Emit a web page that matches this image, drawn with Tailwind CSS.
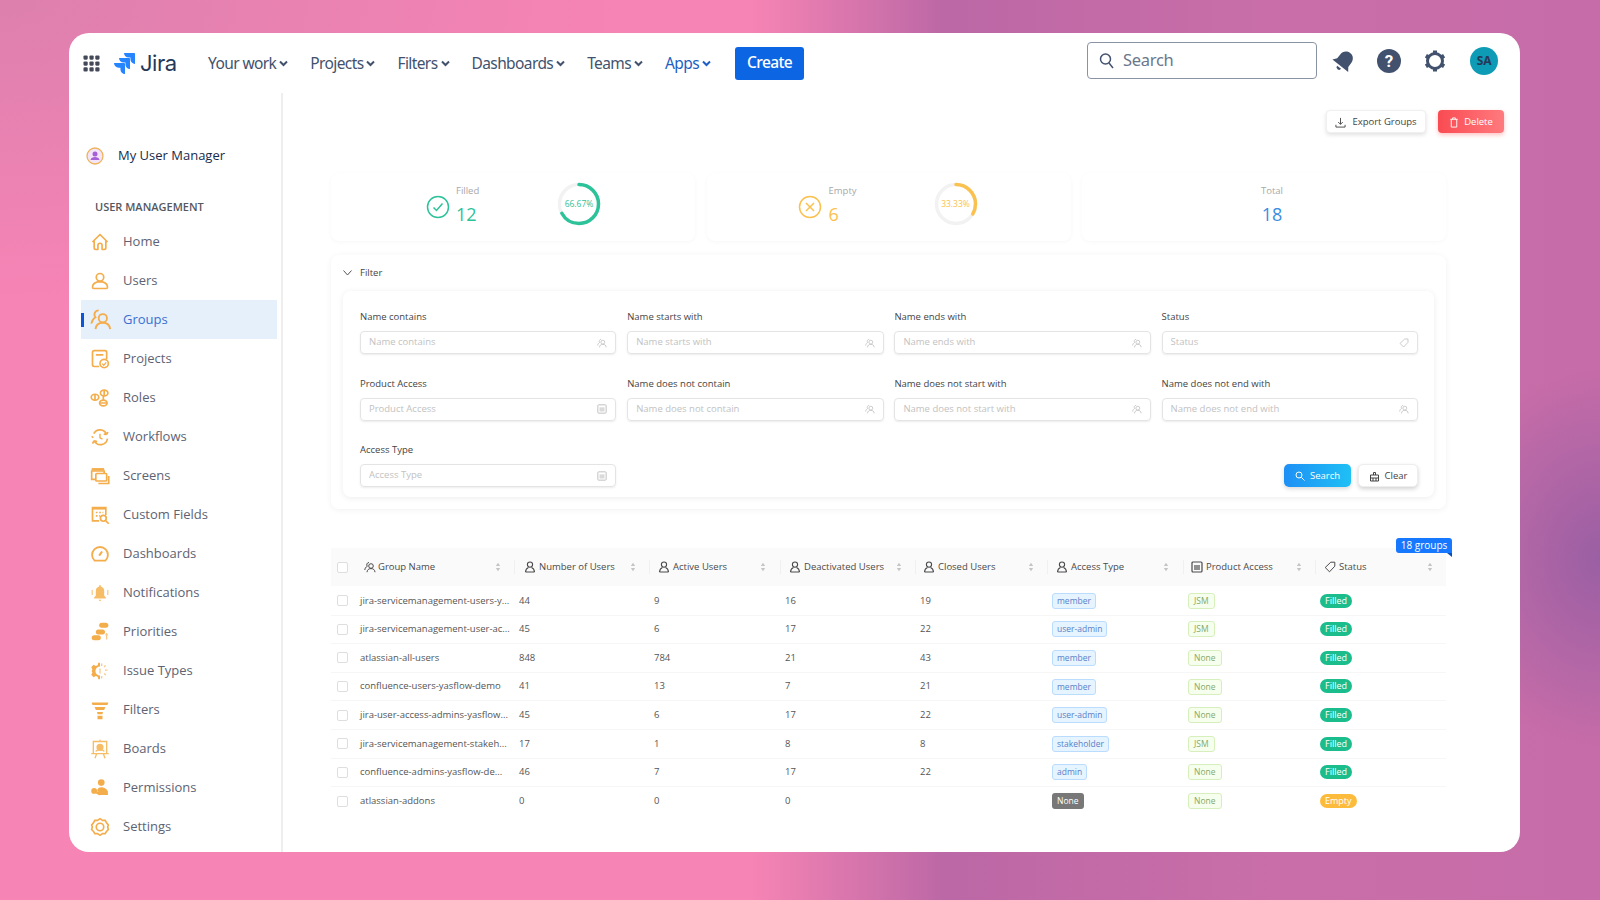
<!DOCTYPE html>
<html lang="en">
<head>
<meta charset="utf-8">
<title>My User Manager</title>
<script src="https://cdn.jsdelivr.net/npm/@tailwindcss/browser@4"></script>
</head>
<body class="w-[1600px] h-[900px] overflow-hidden pt-[33px] pl-[69px] font-['Open_Sans',sans-serif] bg-[radial-gradient(ellipse_150px_190px_at_100%_62%,#9a5fa3,transparent),radial-gradient(ellipse_620px_300px_at_0%_0%,#dd80ae,transparent),linear-gradient(90deg,#f684b5_0%,#f684b4_47%,#bc68a6_59%,#c96ea8_80%,#c66ca8_100%)]">
<svg class="hidden" xmlns="http://www.w3.org/2000/svg">
  <symbol id="u" viewBox="0 0 12 12"><circle cx="6" cy="3.600" r="2.600" fill="none" stroke="currentColor" stroke-width="1.100"/><path d="M1.500 11c.2-2.600 1.600-4 3-4.500M10.500 11c-.2-2.600-1.600-4-3-4.500M1.500 11h9" fill="none" stroke="currentColor" stroke-width="1.100"/></symbol>
  <symbol id="ug" viewBox="0 0 12 12"><circle cx="7" cy="5" r="2.300" fill="none" stroke="currentColor" stroke-width="1"/><path d="M3 11.200c.2-2.400 1.600-3.600 4-3.600s3.800 1.200 4 3.600M5 1.500a2.300 2.300 0 0 0-1.700 3.800C1.800 6 .9 7.300.8 9" fill="none" stroke="currentColor" stroke-width="1"/></symbol>
  <symbol id="s" viewBox="0 0 8 14"><path d="M4 1 7 5.500H1z" fill="#c4c4c4"/><path d="M4 13 1 8.500h6z" fill="#c4c4c4"/></symbol>
  <symbol id="box" viewBox="0 0 12 12"><rect x="1" y="1" width="10" height="10" rx="1" fill="none" stroke="currentColor" stroke-width="1.200"/><rect x="3" y="4" width="6" height="5" fill="currentColor" opacity=".6"/></symbol>
  <symbol id="tag" viewBox="0 0 12 12"><path d="M6.800 1.200H10.800V5.200L5.500 10.800 1.200 6.500z" fill="none" stroke="currentColor" stroke-width="1"/></symbol>
</svg>

<div class="w-[1451px] h-[819px] rounded-[20px] bg-white overflow-hidden">
  <!-- top navigation -->
  <header class="h-[60px] flex items-center pl-[14px] pr-[22px]">
    <svg class="w-[17px] h-[17px] text-[#44495a]" viewBox="0 0 18 18" fill="currentColor"><rect x=".5" y=".5" width="4.500" height="4.500" rx="1.200"/><rect x="6.800" y=".5" width="4.500" height="4.500" rx="1.200"/><rect x="13" y=".5" width="4.500" height="4.500" rx="1.200"/><rect x=".5" y="6.800" width="4.500" height="4.500" rx="1.200"/><rect x="6.800" y="6.800" width="4.500" height="4.500" rx="1.200"/><rect x="13" y="6.800" width="4.500" height="4.500" rx="1.200"/><rect x=".5" y="13" width="4.500" height="4.500" rx="1.200"/><rect x="6.800" y="13" width="4.500" height="4.500" rx="1.200"/><rect x="13" y="13" width="4.500" height="4.500" rx="1.200"/></svg>
    <svg class="w-[21px] h-[21px] ml-[14px] text-[#2684ff]" viewBox="0 0 24 24" fill="currentColor"><path d="M11.571 11.513H0a5.218 5.218 0 0 0 5.232 5.215h2.130v2.057A5.215 5.215 0 0 0 12.575 24V12.518a1.005 1.005 0 0 0-1.005-1.005zm5.723-5.756H5.736a5.215 5.215 0 0 0 5.215 5.214h2.129v2.058a5.218 5.218 0 0 0 5.215 5.214V6.758a1.001 1.001 0 0 0-1.001-1.001zM23.013 0H11.455a5.215 5.215 0 0 0 5.215 5.215h2.129v2.057A5.215 5.215 0 0 0 24 12.483V1.005A1.001 1.001 0 0 0 23.013 0Z"/></svg>
    <span class="ml-[5px] font-['Inter',sans-serif] font-normal text-[22px] leading-none tracking-[-0.5px] text-[#253858] w-[68px]">Jira</span>
    <nav class="flex items-center gap-[22px] font-['Noto_Sans',sans-serif] text-[15.500px] tracking-[-0.6px] text-[#42526e]">
      <a class="flex items-center gap-[3px] pt-[1px]">Your work<svg class="w-[9px] h-[7px]" viewBox="0 0 9 7" fill="none" stroke="currentColor" stroke-width="2"><path d="M1 1.500 4.500 5 8 1.500"/></svg></a>
      <a class="flex items-center gap-[3px] pt-[1px]">Projects<svg class="w-[9px] h-[7px]" viewBox="0 0 9 7" fill="none" stroke="currentColor" stroke-width="2"><path d="M1 1.500 4.500 5 8 1.500"/></svg></a>
      <a class="flex items-center gap-[3px] pt-[1px]">Filters<svg class="w-[9px] h-[7px]" viewBox="0 0 9 7" fill="none" stroke="currentColor" stroke-width="2"><path d="M1 1.500 4.500 5 8 1.500"/></svg></a>
      <a class="flex items-center gap-[3px] pt-[1px]">Dashboards<svg class="w-[9px] h-[7px]" viewBox="0 0 9 7" fill="none" stroke="currentColor" stroke-width="2"><path d="M1 1.500 4.500 5 8 1.500"/></svg></a>
      <a class="flex items-center gap-[3px] pt-[1px]">Teams<svg class="w-[9px] h-[7px]" viewBox="0 0 9 7" fill="none" stroke="currentColor" stroke-width="2"><path d="M1 1.500 4.500 5 8 1.500"/></svg></a>
      <a class="flex items-center gap-[3px] pt-[1px] text-[#1d5fc4]">Apps<svg class="w-[9px] h-[7px]" viewBox="0 0 9 7" fill="none" stroke="currentColor" stroke-width="2"><path d="M1 1.500 4.500 5 8 1.500"/></svg></a>
      <button class="w-[69px] h-[33px] ml-[2px] rounded-[3px] bg-[#0c66e4] text-white font-medium">Create</button>
    </nav>
    <div class="ml-auto mb-[5px] flex items-center">
      <div class="w-[230px] h-[37px] rounded-[4px] border border-[#8993a4] flex items-center pl-[11px] gap-[9px] font-['Noto_Sans',sans-serif] text-[16.500px] tracking-[-0.3px] text-[#6b778c]">
        <svg class="w-[15px] h-[17px] text-[#42526e]" viewBox="0 0 15 17" fill="none" stroke="currentColor" stroke-width="1.500"><circle cx="6.500" cy="7" r="5"/><path d="m10 11 4 5"/></svg>
        <span>Search</span>
      </div>
      <svg class="w-[26px] h-[26px] ml-[14px] text-[#42526e]" viewBox="0 0 26 26" fill="currentColor"><g transform="rotate(38 13 13)"><path d="M13 3c-4.500 0-7 3.500-7 7.500V15l-3 4h20l-3-4v-4.500C20 6.500 17.500 3 13 3z"/><path d="M10.500 21a2.500 2.500 0 0 0 5 0z"/></g></svg>
      <svg class="w-[26px] h-[26px] ml-[19px]" viewBox="0 0 26 26"><circle cx="13" cy="13" r="12" fill="#42526e"/><text x="13" y="19" text-anchor="middle" font-family="Roboto, sans-serif" font-weight="700" font-size="17" fill="#fff">?</text></svg>
      <svg class="w-[26px] h-[26px] ml-[20px] text-[#42526e]" viewBox="0 0 26 26" fill="none" stroke="currentColor"><circle cx="13" cy="13" r="7.500" stroke-width="3"/><path d="M13 2.500v3.500M13 20v3.500M3.900 7.700l3 1.800M19.100 16.500l3 1.800M3.900 18.300l3-1.800M19.100 9.500l3-1.800" stroke-width="4"/></svg>
      <div class="w-[28px] h-[28px] ml-[22px] rounded-full bg-[#0e9bb5] flex items-center justify-center font-['Noto_Sans',sans-serif] text-[12px] font-bold tracking-[-0.3px] text-[#253858]">SA</div>
    </div>
  </header>

  <div class="flex h-[759px]">
    <!-- sidebar -->
    <aside class="w-[214px] shrink-0 border-r-2 border-[#eeeeee] pl-[12px] text-[13px] text-[#5e6373] whitespace-nowrap">
      <div class="flex items-center h-[20px] mt-[53px] pl-[5px] gap-[14px] text-[#172b4d] font-medium text-[13px]">
        <svg class="w-[18px] h-[18px]" viewBox="0 0 18 18"><circle cx="9" cy="9" r="8" fill="#f3e4f7" stroke="#eeb35a" stroke-width="1.300"/><circle cx="9" cy="7" r="2.500" fill="#a65fd6"/><path d="M4.500 13c.5-2.300 2.300-3 4.500-3s4 .7 4.500 3z" fill="#a65fd6"/></svg>
        My User Manager
      </div>
      <div class="pl-[14px] mt-[33px] h-[16px] leading-[16px] text-[11px] font-semibold text-[#55585f]">USER MANAGEMENT</div>
      <div class="mt-[7px] w-[196px] text-[#5e6373]">
        <a class="h-[39.050px] flex items-center pl-[9px] gap-[13px]"><svg class="w-[20px] h-[20px] shrink-0" viewBox="0 0 24 24" fill="none" stroke="#f4ad4b" stroke-width="2" stroke-linejoin="round"><path d="M3 12 12 3l9 9M5 10v9a2 2 0 0 0 2 2h2.500v-5a2.500 2.500 0 0 1 5 0v5H17a2 2 0 0 0 2-2v-9"/></svg>Home</a>
        <a class="h-[39.050px] flex items-center pl-[9px] gap-[13px]"><svg class="w-[20px] h-[20px] shrink-0" viewBox="0 0 24 24" fill="none" stroke="#f4ad4b" stroke-width="2"><circle cx="12" cy="7.500" r="4.500"/><path d="M9 13c-4 1-6 3.500-6 6.500 0 1 .5 1.500 1.500 1.500h15c1 0 1.500-.5 1.500-1.500 0-3-2-5.500-6-6.500z"/></svg>Users</a>
        <a class="relative h-[39.050px] flex items-center pl-[9px] gap-[13px] bg-[#e6f0fb] text-[#3a6fd0]"><span class="absolute left-0 top-[13px] w-[3px] h-[14px] bg-[#0c55d9]"></span><svg class="w-[22px] h-[22px] shrink-0 -mr-[2px]" viewBox="0 0 24 24" fill="none" stroke="#f4ad4b" stroke-width="2"><circle cx="14" cy="10" r="4.500"/><path d="M6 22c.5-4.500 3.500-7 8-7s7.500 2.500 8 7M9.500 1.500A4.500 4.500 0 0 0 6 9C3.500 10.500 2 13 1.500 16"/></svg>Groups</a>
        <a class="h-[39.050px] flex items-center pl-[9px] gap-[13px]"><svg class="w-[20px] h-[20px] shrink-0" viewBox="0 0 24 24" fill="none" stroke="#f4ad4b" stroke-width="2"><path d="M11 21H5a2 2 0 0 1-2-2V4a2 2 0 0 1 2-2h13a2 2 0 0 1 2 2v8M7 7h9"/><circle cx="17" cy="17.500" r="5"/><path d="m14.500 17.500 2 2 3-3.500" stroke-width="1.500"/></svg>Projects</a>
        <a class="h-[39.050px] flex items-center pl-[9px] gap-[13px]"><svg class="w-[20px] h-[20px] shrink-0" viewBox="0 0 24 24" fill="none" stroke="#f4ad4b" stroke-width="2"><ellipse cx="6" cy="11" rx="4.500" ry="3.500"/><path d="M6 7.500v7"/><ellipse cx="17" cy="6" rx="4.500" ry="3.500"/><path d="M17 2.500v7"/><ellipse cx="16" cy="18" rx="4.500" ry="3.500"/><path d="M11.500 18h9M16 9.500v5"/></svg>Roles</a>
        <a class="h-[39.050px] flex items-center pl-[9px] gap-[13px]"><svg class="w-[20px] h-[20px] shrink-0" viewBox="0 0 24 24" fill="none" stroke="#f4ad4b" stroke-width="2"><path d="M4.500 8A8.500 8.500 0 0 1 20 9M20 9l1.500-3M20 9l-3.500-.5M21 14a8.500 8.500 0 0 1-16 2.500M5 16.500 3 20M5 16.500l3.500 1"/><path d="M12 8v5l3 1.500M2 11l2 2" stroke-width="1.700"/></svg>Workflows</a>
        <a class="h-[39.050px] flex items-center pl-[9px] gap-[13px]"><svg class="w-[20px] h-[20px] shrink-0" viewBox="0 0 24 24" fill="none" stroke="#f4ad4b" stroke-width="2"><path d="M7 16H2V6h15v3"/><path d="M2 4h15" stroke-width="3"/><rect x="7" y="9" width="13" height="9" rx="1"/><path d="M22.500 12v9H10"/></svg>Screens</a>
        <a class="h-[39.050px] flex items-center pl-[9px] gap-[13px]"><svg class="w-[20px] h-[20px] shrink-0" viewBox="0 0 24 24" fill="none" stroke="#f4ad4b" stroke-width="2"><path d="M11 19H3V3h16v9"/><path d="M3 4h16" stroke-width="3"/><path d="M7 9h2M11 9h2M15 9h1M7 13h2M11 13h1" stroke-width="2"/><circle cx="16" cy="16" r="3.500"/><path d="m19 19 3.500 3.500"/></svg>Custom Fields</a>
        <a class="h-[39.050px] flex items-center pl-[9px] gap-[13px]"><svg class="w-[20px] h-[20px] shrink-0" viewBox="0 0 24 24" fill="none" stroke="#f4ad4b" stroke-width="2.200"><path d="M5.500 20h13a9.500 9.500 0 1 0-13 0z"/><path d="m11 14 3.500-5" stroke-width="2.500"/></svg>Dashboards</a>
        <a class="h-[39.050px] flex items-center pl-[9px] gap-[13px]"><svg class="w-[20px] h-[20px] shrink-0" viewBox="0 0 24 24" fill="#f7bd66"><path d="M12 2.500c-.7 0-1 .5-1 1v.8C8.500 5 7 7 7 9.500V15l-2 2.500v1h14v-1L17 15V9.500c0-2.500-1.500-4.500-4-5.200v-.8c0-.5-.3-1-1-1z"/><path d="M10 20h4l-2 2zM2 8.500h1.200v6H2zM20.800 8.500H22v6h-1.200z"/></svg>Notifications</a>
        <a class="h-[39.050px] flex items-center pl-[9px] gap-[13px]"><svg class="w-[20px] h-[20px] shrink-0" viewBox="0 0 24 24" fill="#f4ad4b"><rect x="11" y="1" width="11" height="6" rx="3"/><rect x="7" y="9" width="11" height="6" rx="3"/><rect x="2" y="16" width="11" height="6" rx="3"/><path d="M20 13l2 3h-1.300v5h-1.400v-5H18z" opacity=".7"/></svg>Priorities</a>
        <a class="h-[39.050px] flex items-center pl-[9px] gap-[13px]"><svg class="w-[20px] h-[20px] shrink-0" viewBox="0 0 24 24"><path d="M12 2v4.500a5.500 5.500 0 0 0 0 11V22l-2-.2-.8-2.800-2.300-1-2.600 1.400-2.800-2.800L2.900 14 2 12l.9-2-1.400-2.600L4.300 4.600 6.900 6l2.300-1L10 2.200z" fill="#f4ad4b"/><path d="M14 3v3M18.500 5l-1.500 2.500M21 11h-3M19 17l-2-2M14 21v-3M12 9v6" stroke="#f7c98a" stroke-width="1.500"/></svg>Issue Types</a>
        <a class="h-[39.050px] flex items-center pl-[9px] gap-[13px]"><svg class="w-[20px] h-[20px] shrink-0" viewBox="0 0 24 24" fill="#f4ad4b"><path d="M2 3h20l-1 3H3zM5.500 8.500h13L17 12H7zM8.500 14.500h7l-.5 2.500H9zM9 19h6v4H9z"/></svg>Filters</a>
        <a class="h-[39.050px] flex items-center pl-[9px] gap-[13px]"><svg class="w-[20px] h-[20px] shrink-0" viewBox="0 0 24 24" fill="none" stroke="#f7bd66" stroke-width="1.600"><path d="M1.500 17.500h21M4 3h16v14.500H4zM12 1v2M8 17.500 6 23M16 17.500l2 5.500"/><circle cx="12" cy="10" r="3.500" fill="#f7bd66"/><path d="M7 15c.5-1.500 2-2 5-2s4.500.5 5 2" stroke-width="1.600"/></svg>Boards</a>
        <a class="h-[39.050px] flex items-center pl-[9px] gap-[13px]"><svg class="w-[20px] h-[20px] shrink-0" viewBox="0 0 24 24" fill="#f4ad4b"><circle cx="13.500" cy="5.500" r="4"/><path d="M7 19l3-2.500-1.500-1.500c.8-3 2.500-4 5-4s6 1 8 5v4.500H12z"/><circle cx="5" cy="15.500" r="3.500"/><path d="m7 17 4 4 1.500-1.500-4-4z"/></svg>Permissions</a>
        <a class="h-[39.050px] flex items-center pl-[9px] gap-[13px]"><svg class="w-[20px] h-[20px] shrink-0" viewBox="0 0 24 24" fill="none" stroke="#f4ad4b" stroke-width="2"><path d="M12 2 15 4l3.200 0 1.600 2.800 2.200 2.700-.8 2.500.8 3-2.200 2.300-1.600 2.700-3.200 0L12 22 9 20l-3.200 0-1.600-2.700L2 15l.8-3L2 9.500l2.200-2.700L5.800 4 9 4z"/><circle cx="12" cy="12" r="4.500"/></svg>Settings</a>
      </div>
    </aside>

    <!-- main -->
    <main class="flex-1 pt-[17px] text-[#3d3d3d]">
      <div class="flex justify-end gap-[12px] pr-[16px] text-[9.500px]">
        <button class="w-[100px] h-[23px] pt-[1px] rounded-[4px] bg-white border border-[#f0f0f0] shadow-[0_2px_4px_rgba(0,0,0,0.12)] flex items-center justify-center gap-[6px] text-[#444]"><svg class="w-[11px] h-[11px]" viewBox="0 0 12 12" fill="none" stroke="currentColor"><path d="M6 1v7M3.500 5.500 6 8l2.500-2.500M1 8.500V11h10V8.500"/></svg>Export Groups</button>
        <button class="w-[66px] h-[23px] pt-[1px] rounded-[4px] bg-[linear-gradient(90deg,#f94b52,#ff7a7e)] shadow-[0_2px_4px_rgba(255,80,80,0.35)] flex items-center justify-center gap-[5px] text-white"><svg class="w-[10px] h-[11px]" viewBox="0 0 10 12" fill="none" stroke="currentColor"><path d="M2 2.500V11h6V2.500M1 2.500h8M3.500 2.500V1h3v1.500"/></svg>Delete</button>
      </div>

      <div class="ml-[48px] w-[1115px]">
        <!-- stats -->
        <section class="mt-[40px] grid grid-cols-[364px_364px_364px] gap-x-[11.500px] h-[68px]">
          <div class="relative rounded-[8px] shadow-[0_1px_4px_rgba(0,0,0,0.035)] flex items-center pl-[95px]">
            <svg class="w-[24px] h-[24px]" viewBox="0 0 24 24" fill="none" stroke="#2cc29a" stroke-width="1.500"><circle cx="12" cy="12" r="10.500"/><path d="m7.500 12.500 3 3 6-7"/></svg>
            <div class="ml-[6px] w-[99px] -mt-[2px]"><div class="text-[9.500px] leading-[12px] text-[#a8a8a8]">Filled</div><div class="pt-[3px] text-[18px] leading-[28px] text-[#2cc29a]">12</div></div>
            <div class="relative w-[44px] h-[44px] ml-[2px] -mt-[6px]">
              <svg class="w-[44px] h-[44px] -rotate-90" viewBox="0 0 44 44" fill="none" stroke-width="3.500"><circle cx="22" cy="22" r="19.500" stroke="#f2f2f2"/><circle cx="22" cy="22" r="19.500" stroke="#2cc29a" stroke-dasharray="81.700 122.500" stroke-linecap="round"/></svg>
              <span class="absolute inset-0 flex items-center justify-center text-[8.500px] text-[#2cc29a]">66.67%</span>
            </div>
          </div>
          <div class="relative rounded-[8px] shadow-[0_1px_4px_rgba(0,0,0,0.035)] flex items-center pl-[91px]">
            <svg class="w-[24px] h-[24px]" viewBox="0 0 24 24" fill="none" stroke="#fbc14f" stroke-width="1.500"><circle cx="12" cy="12" r="10.500"/><path d="m8 8 8 8M16 8l-8 8"/></svg>
            <div class="ml-[7px] w-[105px] -mt-[2px]"><div class="text-[9.500px] leading-[12px] text-[#a8a8a8]">Empty</div><div class="pt-[3px] text-[18px] leading-[28px] text-[#fbc14f]">6</div></div>
            <div class="relative w-[44px] h-[44px] -mt-[6px]">
              <svg class="w-[44px] h-[44px] -rotate-90" viewBox="0 0 44 44" fill="none" stroke-width="3.500"><circle cx="22" cy="22" r="19.500" stroke="#f2f2f2"/><circle cx="22" cy="22" r="19.500" stroke="#fbc14f" stroke-dasharray="40.800 122.500" stroke-linecap="round"/></svg>
              <span class="absolute inset-0 flex items-center justify-center text-[8.500px] text-[#fbc14f]">33.33%</span>
            </div>
          </div>
          <div class="rounded-[8px] shadow-[0_1px_4px_rgba(0,0,0,0.035)] flex flex-col items-center justify-center pl-[16px] pb-[2px]">
            <div class="text-[9.500px] leading-[12px] text-[#a8a8a8]">Total</div><div class="pt-[3px] text-[18px] leading-[28px] text-[#3b8de0]">18</div>
          </div>
        </section>

        <!-- filter -->
        <section class="mt-[14px] h-[254px] rounded-[8px] shadow-[0_1px_6px_rgba(0,0,0,0.06)]">
          <div class="h-[36px] flex items-center pl-[12px] gap-[8px] text-[9.500px] text-[#444]"><svg class="w-[9px] h-[6px]" viewBox="0 0 9 6" fill="none" stroke="#555" stroke-width="1"><path d="M.5.5 4.500 5 8.500.5"/></svg>Filter</div>
          <div class="mx-[12px] h-[206px] rounded-[8px] shadow-[0_1px_6px_rgba(0,0,0,0.08)] pt-[19px] pl-[17px] pr-[16px] grid grid-cols-4 gap-x-[10.800px] gap-y-[22.500px] content-start text-[9.500px]">
            <label class="block"><span class="block h-[14px] leading-[14px] mb-[7px] text-[#444]">Name contains</span><span class="h-[23px] flex items-center rounded-[4px] border border-[#e4e4e4] shadow-[0_1px_2px_rgba(0,0,0,0.08)] px-[8px] text-[#c2c2c2]"><input class="flex-1 min-w-0 outline-none placeholder:text-[#c2c2c2]" placeholder="Name contains"><svg class="w-[10px] h-[10px]"><use href="#ug"/></svg></span></label>
            <label class="block"><span class="block h-[14px] leading-[14px] mb-[7px] text-[#444]">Name starts with</span><span class="h-[23px] flex items-center rounded-[4px] border border-[#e4e4e4] shadow-[0_1px_2px_rgba(0,0,0,0.08)] px-[8px] text-[#c2c2c2]"><input class="flex-1 min-w-0 outline-none placeholder:text-[#c2c2c2]" placeholder="Name starts with"><svg class="w-[10px] h-[10px]"><use href="#ug"/></svg></span></label>
            <label class="block"><span class="block h-[14px] leading-[14px] mb-[7px] text-[#444]">Name ends with</span><span class="h-[23px] flex items-center rounded-[4px] border border-[#e4e4e4] shadow-[0_1px_2px_rgba(0,0,0,0.08)] px-[8px] text-[#c2c2c2]"><input class="flex-1 min-w-0 outline-none placeholder:text-[#c2c2c2]" placeholder="Name ends with"><svg class="w-[10px] h-[10px]"><use href="#ug"/></svg></span></label>
            <label class="block"><span class="block h-[14px] leading-[14px] mb-[7px] text-[#444]">Status</span><span class="h-[23px] flex items-center rounded-[4px] border border-[#e4e4e4] shadow-[0_1px_2px_rgba(0,0,0,0.08)] px-[8px] text-[#c2c2c2]"><input class="flex-1 min-w-0 outline-none placeholder:text-[#c2c2c2]" placeholder="Status"><svg class="w-[10px] h-[10px]"><use href="#tag"/></svg></span></label>
            <label class="block"><span class="block h-[14px] leading-[14px] mb-[7px] text-[#444]">Product Access</span><span class="h-[23px] flex items-center rounded-[4px] border border-[#e4e4e4] shadow-[0_1px_2px_rgba(0,0,0,0.08)] px-[8px] text-[#c2c2c2]"><input class="flex-1 min-w-0 outline-none placeholder:text-[#c2c2c2]" placeholder="Product Access"><svg class="w-[10px] h-[10px]"><use href="#box"/></svg></span></label>
            <label class="block"><span class="block h-[14px] leading-[14px] mb-[7px] text-[#444]">Name does not contain</span><span class="h-[23px] flex items-center rounded-[4px] border border-[#e4e4e4] shadow-[0_1px_2px_rgba(0,0,0,0.08)] px-[8px] text-[#c2c2c2]"><input class="flex-1 min-w-0 outline-none placeholder:text-[#c2c2c2]" placeholder="Name does not contain"><svg class="w-[10px] h-[10px]"><use href="#ug"/></svg></span></label>
            <label class="block"><span class="block h-[14px] leading-[14px] mb-[7px] text-[#444]">Name does not start with</span><span class="h-[23px] flex items-center rounded-[4px] border border-[#e4e4e4] shadow-[0_1px_2px_rgba(0,0,0,0.08)] px-[8px] text-[#c2c2c2]"><input class="flex-1 min-w-0 outline-none placeholder:text-[#c2c2c2]" placeholder="Name does not start with"><svg class="w-[10px] h-[10px]"><use href="#ug"/></svg></span></label>
            <label class="block"><span class="block h-[14px] leading-[14px] mb-[7px] text-[#444]">Name does not end with</span><span class="h-[23px] flex items-center rounded-[4px] border border-[#e4e4e4] shadow-[0_1px_2px_rgba(0,0,0,0.08)] px-[8px] text-[#c2c2c2]"><input class="flex-1 min-w-0 outline-none placeholder:text-[#c2c2c2]" placeholder="Name does not end with"><svg class="w-[10px] h-[10px]"><use href="#ug"/></svg></span></label>
            <label class="block"><span class="block h-[14px] leading-[14px] mb-[7px] text-[#444]">Access Type</span><span class="h-[23px] flex items-center rounded-[4px] border border-[#e4e4e4] shadow-[0_1px_2px_rgba(0,0,0,0.08)] px-[8px] text-[#c2c2c2]"><input class="flex-1 min-w-0 outline-none placeholder:text-[#c2c2c2]" placeholder="Access Type"><svg class="w-[10px] h-[10px]"><use href="#box"/></svg></span></label>
            <div class="col-span-3 flex items-end justify-end gap-[7px]">
              <button class="w-[67px] h-[23px] pt-[1px] rounded-[5px] bg-[linear-gradient(90deg,#1e90f5,#1fc0f5)] shadow-[0_2px_4px_rgba(0,0,0,0.15)] text-white flex items-center justify-center gap-[5px]"><svg class="w-[10px] h-[10px]" viewBox="0 0 10 10" fill="none" stroke="currentColor"><circle cx="4" cy="4" r="3"/><path d="m6.500 6.500 3 3"/></svg>Search</button>
              <button class="w-[60px] h-[23px] pt-[1px] rounded-[5px] bg-white border border-[#eee] shadow-[0_2px_4px_rgba(0,0,0,0.18)] text-[#444] flex items-center justify-center gap-[5px]"><svg class="w-[11px] h-[11px]" viewBox="0 0 11 11" fill="none" stroke="currentColor"><path d="M4.500 4V1.500h2V4M1.500 4h8V10h-8zM1.500 7h8M4 7v3M7 7v3"/></svg>Clear</button>
            </div>
          </div>
        </section>

        <!-- table -->
        <section class="relative mt-[39px] text-[9.500px] text-[#555]">
          <span class="absolute -top-[10px] -right-[6px] w-[56px] h-[15px] rounded-t-[3px] rounded-bl-[3px] bg-[#1677ff] text-white text-[10px] leading-[15px] text-center z-10">18 groups<span class="absolute right-0 top-[15px] border-t-[4px] border-l-[5px] border-t-[#0a4fb8] border-l-transparent"></span></span>
          <div class="grid grid-cols-[183px_135px_131px_135px_132px_136px_132px_131px] h-[38px] mb-[1px] bg-[#fafafa] items-center font-medium text-[#4a4a4a]">
            <div class="flex items-center pl-[6px] pr-[13px]"><span class="w-[11px] h-[11px] rounded-[2px] border border-[#dedede] bg-white"></span><svg class="w-[12px] h-[12px] ml-[16px] mr-[2px]"><use href="#ug"/></svg><span class="flex-1">Group Name</span><svg class="w-[6px] h-[10px]"><use href="#s"/></svg></div>
            <div class="flex items-center h-[14px] border-l border-[#f0f0f0] pl-[9px] pr-[13px] gap-[3px]"><svg class="w-[12px] h-[12px]"><use href="#u"/></svg><span class="flex-1">Number of Users</span><svg class="w-[6px] h-[10px]"><use href="#s"/></svg></div>
            <div class="flex items-center h-[14px] border-l border-[#f0f0f0] pl-[8px] pr-[14px] gap-[3px]"><svg class="w-[12px] h-[12px]"><use href="#u"/></svg><span class="flex-1">Active Users</span><svg class="w-[6px] h-[10px]"><use href="#s"/></svg></div>
            <div class="flex items-center h-[14px] border-l border-[#f0f0f0] pl-[8px] pr-[13px] gap-[3px]"><svg class="w-[12px] h-[12px]"><use href="#u"/></svg><span class="flex-1">Deactivated Users</span><svg class="w-[6px] h-[10px]"><use href="#s"/></svg></div>
            <div class="flex items-center h-[14px] border-l border-[#f0f0f0] pl-[7px] pr-[13px] gap-[3px]"><svg class="w-[12px] h-[12px]"><use href="#u"/></svg><span class="flex-1">Closed Users</span><svg class="w-[6px] h-[10px]"><use href="#s"/></svg></div>
            <div class="flex items-center h-[14px] border-l border-[#f0f0f0] pl-[8px] pr-[14px] gap-[3px]"><svg class="w-[12px] h-[12px]"><use href="#u"/></svg><span class="flex-1">Access Type</span><svg class="w-[6px] h-[10px]"><use href="#s"/></svg></div>
            <div class="flex items-center h-[14px] border-l border-[#f0f0f0] pl-[7px] pr-[13px] gap-[3px]"><svg class="w-[12px] h-[12px]"><use href="#box"/></svg><span class="flex-1">Product Access</span><svg class="w-[6px] h-[10px]"><use href="#s"/></svg></div>
            <div class="flex items-center h-[14px] border-l border-[#f0f0f0] pl-[8px] pr-[13px] gap-[3px]"><svg class="w-[12px] h-[12px]"><use href="#tag"/></svg><span class="flex-1">Status</span><svg class="w-[6px] h-[10px]"><use href="#s"/></svg></div>
          </div>

          <div class="grid grid-cols-[183px_135px_131px_135px_132px_136px_132px_131px] h-[28.600px] items-center border-b border-[#f6f6f6]"><div class="flex items-center min-w-0 pl-[6px]"><span class="shrink-0 w-[11px] h-[11px] rounded-[2px] border border-[#dedede]"></span><span class="ml-[12px] whitespace-nowrap">jira-servicemanagement-users-y...</span></div><div class="pl-[5px]">44</div><div class="pl-[5px]">9</div><div class="pl-[5px]">16</div><div class="pl-[5px]">19</div><div class="pl-[5px]"><span class="inline-block h-[16px] leading-[14px] px-[4px] rounded-[3px] border border-[#b9dcff] bg-[#e6f4ff] text-[#5a7fc7] text-[8.500px]">member</span></div><div class="pl-[5px]"><span class="inline-block h-[16px] leading-[14px] px-[5px] rounded-[3px] border border-[#d6efbd] bg-[#f6ffed] text-[#86a86b] text-[8.500px]">JSM</span></div><div class="pl-[5px]"><span class="inline-block h-[14px] leading-[14px] px-[5px] rounded-full bg-[#1bbd8d] text-white text-[9px]">Filled</span></div></div>
          <div class="grid grid-cols-[183px_135px_131px_135px_132px_136px_132px_131px] h-[28.600px] items-center border-b border-[#f6f6f6]"><div class="flex items-center min-w-0 pl-[6px]"><span class="shrink-0 w-[11px] h-[11px] rounded-[2px] border border-[#dedede]"></span><span class="ml-[12px] whitespace-nowrap">jira-servicemanagement-user-ac...</span></div><div class="pl-[5px]">45</div><div class="pl-[5px]">6</div><div class="pl-[5px]">17</div><div class="pl-[5px]">22</div><div class="pl-[5px]"><span class="inline-block h-[16px] leading-[14px] px-[4px] rounded-[3px] border border-[#b9dcff] bg-[#e6f4ff] text-[#5a7fc7] text-[8.500px]">user-admin</span></div><div class="pl-[5px]"><span class="inline-block h-[16px] leading-[14px] px-[5px] rounded-[3px] border border-[#d6efbd] bg-[#f6ffed] text-[#86a86b] text-[8.500px]">JSM</span></div><div class="pl-[5px]"><span class="inline-block h-[14px] leading-[14px] px-[5px] rounded-full bg-[#1bbd8d] text-white text-[9px]">Filled</span></div></div>
          <div class="grid grid-cols-[183px_135px_131px_135px_132px_136px_132px_131px] h-[28.600px] items-center border-b border-[#f6f6f6]"><div class="flex items-center min-w-0 pl-[6px]"><span class="shrink-0 w-[11px] h-[11px] rounded-[2px] border border-[#dedede]"></span><span class="ml-[12px] whitespace-nowrap">atlassian-all-users</span></div><div class="pl-[5px]">848</div><div class="pl-[5px]">784</div><div class="pl-[5px]">21</div><div class="pl-[5px]">43</div><div class="pl-[5px]"><span class="inline-block h-[16px] leading-[14px] px-[4px] rounded-[3px] border border-[#b9dcff] bg-[#e6f4ff] text-[#5a7fc7] text-[8.500px]">member</span></div><div class="pl-[5px]"><span class="inline-block h-[16px] leading-[14px] px-[5px] rounded-[3px] border border-[#d6efbd] bg-[#f6ffed] text-[#86a86b] text-[8.500px]">None</span></div><div class="pl-[5px]"><span class="inline-block h-[14px] leading-[14px] px-[5px] rounded-full bg-[#1bbd8d] text-white text-[9px]">Filled</span></div></div>
          <div class="grid grid-cols-[183px_135px_131px_135px_132px_136px_132px_131px] h-[28.600px] items-center border-b border-[#f6f6f6]"><div class="flex items-center min-w-0 pl-[6px]"><span class="shrink-0 w-[11px] h-[11px] rounded-[2px] border border-[#dedede]"></span><span class="ml-[12px] whitespace-nowrap">confluence-users-yasflow-demo</span></div><div class="pl-[5px]">41</div><div class="pl-[5px]">13</div><div class="pl-[5px]">7</div><div class="pl-[5px]">21</div><div class="pl-[5px]"><span class="inline-block h-[16px] leading-[14px] px-[4px] rounded-[3px] border border-[#b9dcff] bg-[#e6f4ff] text-[#5a7fc7] text-[8.500px]">member</span></div><div class="pl-[5px]"><span class="inline-block h-[16px] leading-[14px] px-[5px] rounded-[3px] border border-[#d6efbd] bg-[#f6ffed] text-[#86a86b] text-[8.500px]">None</span></div><div class="pl-[5px]"><span class="inline-block h-[14px] leading-[14px] px-[5px] rounded-full bg-[#1bbd8d] text-white text-[9px]">Filled</span></div></div>
          <div class="grid grid-cols-[183px_135px_131px_135px_132px_136px_132px_131px] h-[28.600px] items-center border-b border-[#f6f6f6]"><div class="flex items-center min-w-0 pl-[6px]"><span class="shrink-0 w-[11px] h-[11px] rounded-[2px] border border-[#dedede]"></span><span class="ml-[12px] whitespace-nowrap">jira-user-access-admins-yasflow...</span></div><div class="pl-[5px]">45</div><div class="pl-[5px]">6</div><div class="pl-[5px]">17</div><div class="pl-[5px]">22</div><div class="pl-[5px]"><span class="inline-block h-[16px] leading-[14px] px-[4px] rounded-[3px] border border-[#b9dcff] bg-[#e6f4ff] text-[#5a7fc7] text-[8.500px]">user-admin</span></div><div class="pl-[5px]"><span class="inline-block h-[16px] leading-[14px] px-[5px] rounded-[3px] border border-[#d6efbd] bg-[#f6ffed] text-[#86a86b] text-[8.500px]">None</span></div><div class="pl-[5px]"><span class="inline-block h-[14px] leading-[14px] px-[5px] rounded-full bg-[#1bbd8d] text-white text-[9px]">Filled</span></div></div>
          <div class="grid grid-cols-[183px_135px_131px_135px_132px_136px_132px_131px] h-[28.600px] items-center border-b border-[#f6f6f6]"><div class="flex items-center min-w-0 pl-[6px]"><span class="shrink-0 w-[11px] h-[11px] rounded-[2px] border border-[#dedede]"></span><span class="ml-[12px] whitespace-nowrap">jira-servicemanagement-stakeh...</span></div><div class="pl-[5px]">17</div><div class="pl-[5px]">1</div><div class="pl-[5px]">8</div><div class="pl-[5px]">8</div><div class="pl-[5px]"><span class="inline-block h-[16px] leading-[14px] px-[4px] rounded-[3px] border border-[#b9dcff] bg-[#e6f4ff] text-[#5a7fc7] text-[8.500px]">stakeholder</span></div><div class="pl-[5px]"><span class="inline-block h-[16px] leading-[14px] px-[5px] rounded-[3px] border border-[#d6efbd] bg-[#f6ffed] text-[#86a86b] text-[8.500px]">JSM</span></div><div class="pl-[5px]"><span class="inline-block h-[14px] leading-[14px] px-[5px] rounded-full bg-[#1bbd8d] text-white text-[9px]">Filled</span></div></div>
          <div class="grid grid-cols-[183px_135px_131px_135px_132px_136px_132px_131px] h-[28.600px] items-center border-b border-[#f6f6f6]"><div class="flex items-center min-w-0 pl-[6px]"><span class="shrink-0 w-[11px] h-[11px] rounded-[2px] border border-[#dedede]"></span><span class="ml-[12px] whitespace-nowrap">confluence-admins-yasflow-de...</span></div><div class="pl-[5px]">46</div><div class="pl-[5px]">7</div><div class="pl-[5px]">17</div><div class="pl-[5px]">22</div><div class="pl-[5px]"><span class="inline-block h-[16px] leading-[14px] px-[4px] rounded-[3px] border border-[#b9dcff] bg-[#e6f4ff] text-[#5a7fc7] text-[8.500px]">admin</span></div><div class="pl-[5px]"><span class="inline-block h-[16px] leading-[14px] px-[5px] rounded-[3px] border border-[#d6efbd] bg-[#f6ffed] text-[#86a86b] text-[8.500px]">None</span></div><div class="pl-[5px]"><span class="inline-block h-[14px] leading-[14px] px-[5px] rounded-full bg-[#1bbd8d] text-white text-[9px]">Filled</span></div></div>
          <div class="grid grid-cols-[183px_135px_131px_135px_132px_136px_132px_131px] h-[28.600px] items-center"><div class="flex items-center min-w-0 pl-[6px]"><span class="shrink-0 w-[11px] h-[11px] rounded-[2px] border border-[#dedede]"></span><span class="ml-[12px] whitespace-nowrap">atlassian-addons</span></div><div class="pl-[5px]">0</div><div class="pl-[5px]">0</div><div class="pl-[5px]">0</div><div class="pl-[5px]"></div><div class="pl-[5px]"><span class="inline-block h-[16px] leading-[16px] px-[5px] rounded-[3px] bg-[#787878] text-white text-[8.500px]">None</span></div><div class="pl-[5px]"><span class="inline-block h-[16px] leading-[14px] px-[5px] rounded-[3px] border border-[#d6efbd] bg-[#f6ffed] text-[#86a86b] text-[8.500px]">None</span></div><div class="pl-[5px]"><span class="inline-block h-[14px] leading-[14px] px-[5px] rounded-full bg-[#fdbb3c] text-white text-[9px]">Empty</span></div></div>
        </section>
      </div>
    </main>
  </div>
</div>
</body>
</html>
